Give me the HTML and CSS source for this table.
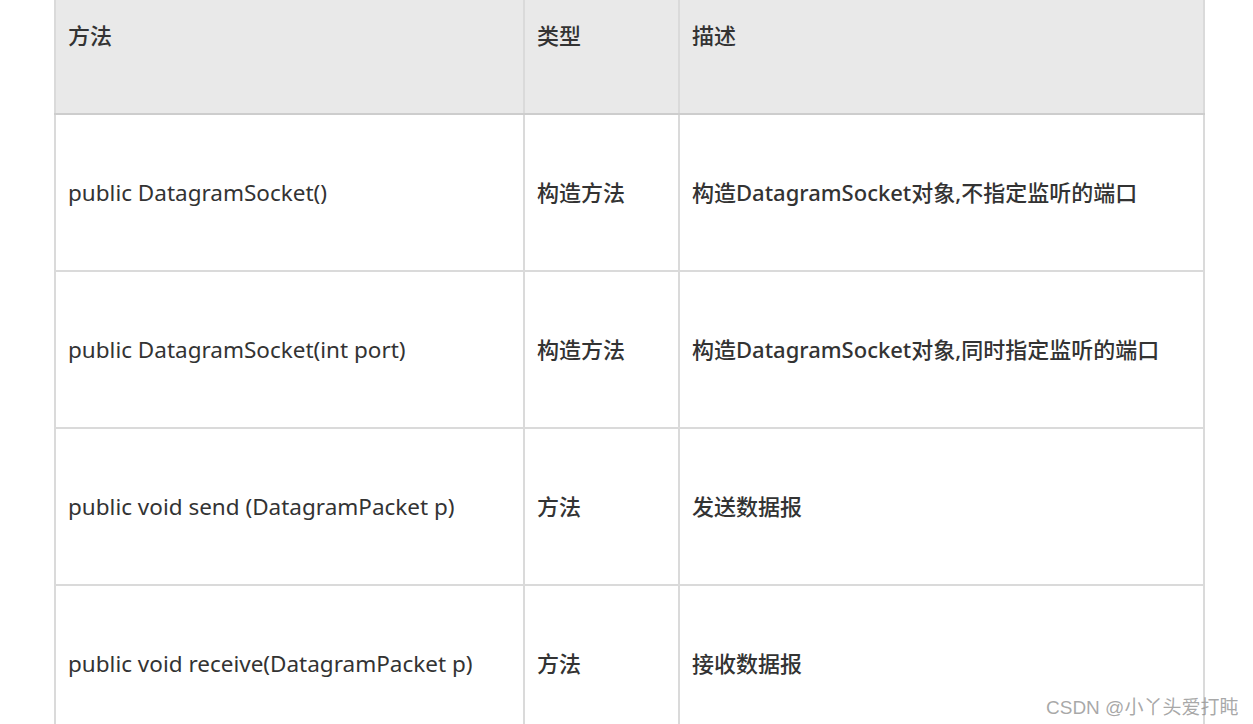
FILE: index.html
```html
<!DOCTYPE html>
<html lang="zh-CN">
<head>
<meta charset="utf-8">
<title>DatagramSocket</title>
<link rel="stylesheet" href="styles.css">
</head>
<body>
<div class="page">
  <table class="api">
    <thead>
      <tr>
        <th class="c1">方法</th>
        <th class="c2">类型</th>
        <th class="c3">描述</th>
      </tr>
    </thead>
    <tbody>
      <tr>
        <td>public DatagramSocket()</td>
        <td class="zh">构造方法</td>
        <td class="zh">构造DatagramSocket对象,不指定监听的端口</td>
      </tr>
      <tr>
        <td>public DatagramSocket(int port)</td>
        <td class="zh">构造方法</td>
        <td class="zh">构造DatagramSocket对象,同时指定监听的端口</td>
      </tr>
      <tr>
        <td>public void send (DatagramPacket p)</td>
        <td class="zh">方法</td>
        <td class="zh">发送数据报</td>
      </tr>
      <tr>
        <td>public void receive(DatagramPacket p)</td>
        <td class="zh">方法</td>
        <td class="zh">接收数据报</td>
      </tr>
    </tbody>
  </table>
  <div class="watermark">CSDN @小丫头爱打盹</div>
</div>
</body>
</html>
```
FILE: styles.css
```css
html, body {
  margin: 0;
  padding: 0;
  background: #ffffff;
}
body {
  width: 1253px;
  height: 724px;
  overflow: hidden;
  font-family: "Noto Sans", "Noto Sans CJK SC", sans-serif;
  color: #333333;
}
.page {
  position: relative;
  width: 1253px;
  height: 724px;
  overflow: hidden;
}
.api {
  border-collapse: collapse;
  margin-left: 54px;
  margin-top: -42px;
  width: 1151px;
  table-layout: fixed;
  font-size: 22.5px;
}
.api th,
.api td {
  border: 2px solid #dadada;
  height: 155px;
  padding: 0 0 0 12px;
  text-align: left;
  vertical-align: middle;
  white-space: nowrap;
  font-weight: 400;
}
.api th {
  background: #e9e9e9;
  font-weight: 500;
  border-bottom-color: #cdcdcd;
  border-top: none;
  font-family: "Noto Sans CJK SC", sans-serif;
  font-size: 22px;
  height: 151px;
  padding-bottom: 4px;
}
.api .c1 { width: 455px; }
.api .c2 { width: 141px; }
.api .c3 { width: auto; }
.api td.zh {
  font-weight: 500;
  font-size: 22px;
  height: 151px;
  padding-bottom: 4px;
}
.watermark {
  position: absolute;
  left: 1046px;
  top: 692px;
  font-family: "Liberation Sans", "Noto Sans CJK SC", sans-serif;
  font-size: 19px;
  color: rgba(140, 140, 140, 0.75);
  white-space: nowrap;
}
```
